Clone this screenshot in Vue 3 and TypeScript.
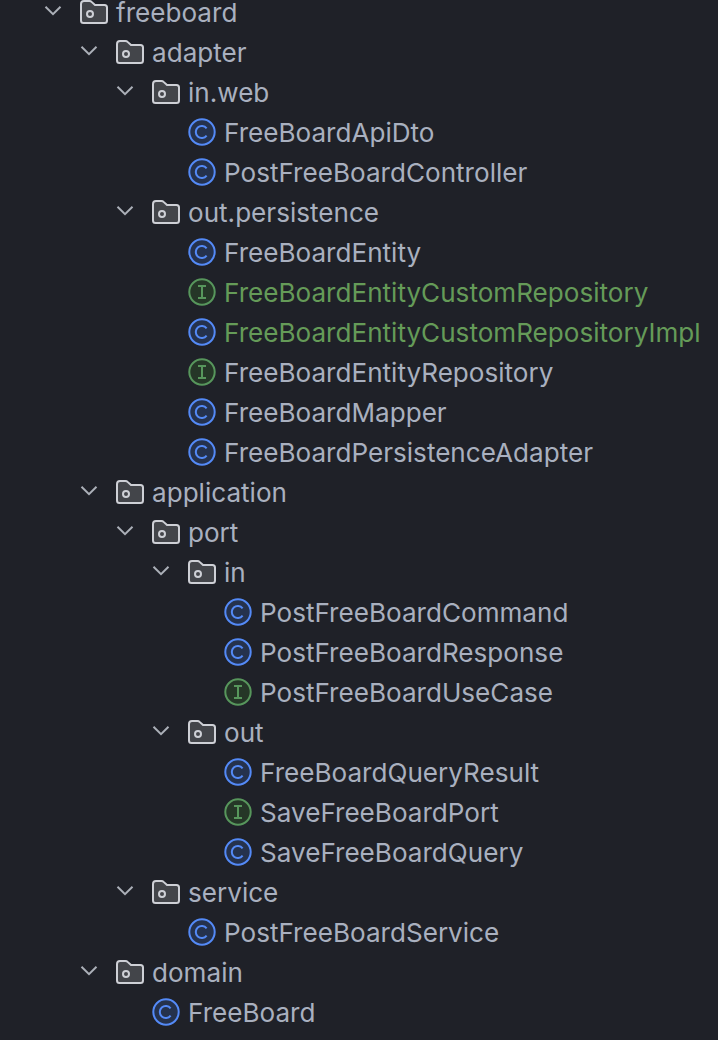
<script setup lang="ts">
interface Row { name: string; depth: number; kind: 'folder' | 'class' | 'iface'; green?: boolean }
const rows: Row[] = [
  { name: 'freeboard', depth: 0, kind: 'folder' },
  { name: 'adapter', depth: 1, kind: 'folder' },
  { name: 'in.web', depth: 2, kind: 'folder' },
  { name: 'FreeBoardApiDto', depth: 3, kind: 'class' },
  { name: 'PostFreeBoardController', depth: 3, kind: 'class' },
  { name: 'out.persistence', depth: 2, kind: 'folder' },
  { name: 'FreeBoardEntity', depth: 3, kind: 'class' },
  { name: 'FreeBoardEntityCustomRepository', depth: 3, kind: 'iface', green: true },
  { name: 'FreeBoardEntityCustomRepositoryImpl', depth: 3, kind: 'class', green: true },
  { name: 'FreeBoardEntityRepository', depth: 3, kind: 'iface' },
  { name: 'FreeBoardMapper', depth: 3, kind: 'class' },
  { name: 'FreeBoardPersistenceAdapter', depth: 3, kind: 'class' },
  { name: 'application', depth: 1, kind: 'folder' },
  { name: 'port', depth: 2, kind: 'folder' },
  { name: 'in', depth: 3, kind: 'folder' },
  { name: 'PostFreeBoardCommand', depth: 4, kind: 'class' },
  { name: 'PostFreeBoardResponse', depth: 4, kind: 'class' },
  { name: 'PostFreeBoardUseCase', depth: 4, kind: 'iface' },
  { name: 'out', depth: 3, kind: 'folder' },
  { name: 'FreeBoardQueryResult', depth: 4, kind: 'class' },
  { name: 'SaveFreeBoardPort', depth: 4, kind: 'iface' },
  { name: 'SaveFreeBoardQuery', depth: 4, kind: 'class' },
  { name: 'service', depth: 2, kind: 'folder' },
  { name: 'PostFreeBoardService', depth: 3, kind: 'class' },
  { name: 'domain', depth: 1, kind: 'folder' },
  { name: 'FreeBoard', depth: 2, kind: 'class' },
]
function indent(r: Row): string {
  return `${(r.kind === 'folder' ? 44 : 80) + 36 * r.depth}px`
}
</script>

<template>
  <div class="tree">
    <div v-for="r in rows" :key="r.name + r.depth" class="row" :style="{ paddingLeft: indent(r) }">
      <svg v-if="r.kind === 'folder'" class="chev" width="18" height="16" viewBox="0 0 18 16">
        <path d="M1.5 1.8 L9 9.2 L16.5 1.8" fill="none" stroke="#abb0b8" stroke-width="2" />
      </svg>
      <svg v-if="r.kind === 'folder'" class="ico folder" width="28" height="24" viewBox="0 0 28 24">
        <path d="M1 4 A3 3 0 0 1 4 1 H9.5 A3 3 0 0 1 11.6 1.9 L15 5 H24.5 A2.5 2.5 0 0 1 27 7.5 V20.5 A2.5 2.5 0 0 1 24.5 23 H3.5 A2.5 2.5 0 0 1 1 20.5 Z" fill="#43454a" stroke="#ced0d6" stroke-width="2" />
        <circle cx="10" cy="14" r="3" fill="none" stroke="#ced0d6" stroke-width="2" />
      </svg>
      <svg v-else-if="r.kind === 'class'" class="ico" width="28" height="28" viewBox="0 0 28 28">
        <circle cx="14" cy="14" r="12.7" fill="#25324d" stroke="#548af7" stroke-width="2" />
        <path d="M18.6 10.4 A6 6 0 1 0 18.6 17.6" fill="none" stroke="#548af7" stroke-width="2" />
      </svg>
      <svg v-else class="ico" width="28" height="28" viewBox="0 0 28 28">
        <circle cx="14" cy="14" r="12.7" fill="#253627" stroke="#57965c" stroke-width="2" />
        <path d="M10 8 H18 M14 8 V20 M10 20 H18" fill="none" stroke="#57965c" stroke-width="2" />
      </svg>
      <span class="label" :class="{ green: r.green }">{{ r.name }}</span>
    </div>
  </div>
</template>

<style scoped>
.tree {
  width: 718px;
  height: 1040px;
  background: #1f2128;
  overflow: hidden;
  font-family: Inter, "Liberation Sans", sans-serif;
}
.row {
  display: flex;
  align-items: center;
  height: 40px;
  white-space: nowrap;
}
.row:first-child {
  margin-top: -7px;
}
.chev {
  flex: none;
  margin-right: 18px;
}
.ico {
  flex: none;
  margin-right: 8px;
  margin-bottom: 2px;
}
.label {
  font-size: 26.1px;
  line-height: 40px;
  color: #a9b0bf;
}
.green {
  color: #659b58;
}
</style>
